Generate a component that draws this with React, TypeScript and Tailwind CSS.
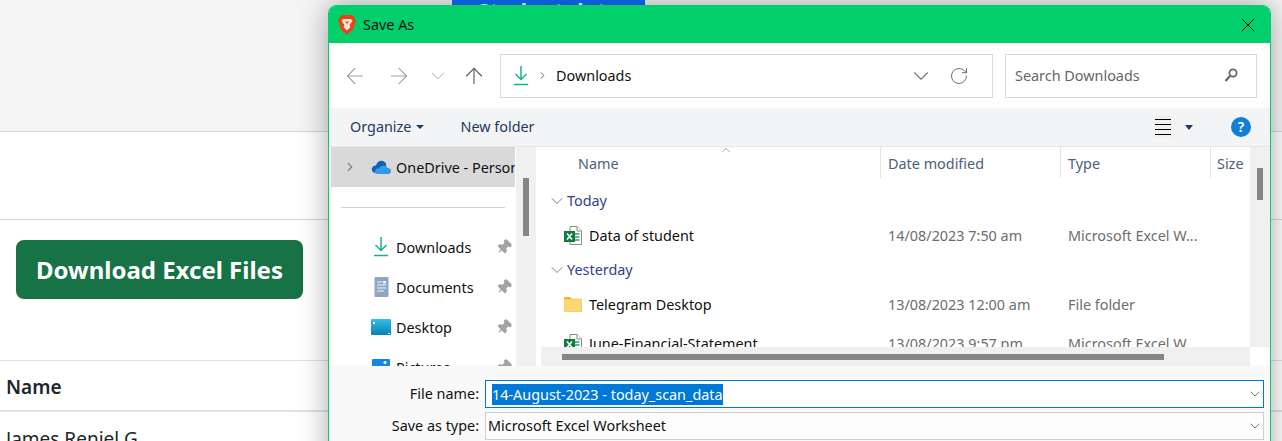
import React from 'react';
import { ArrowLeft, ArrowRight, ArrowUp, ChevronDown, ChevronRight, ChevronUp, RotateCw, X, Pin } from 'lucide-react';

const font = 'font-["Noto_Sans","Open_Sans",sans-serif]';

const BraveLogo = () => (
  <svg width="18" height="21" viewBox="0 0 18 21">
    <path d="M4 1 L14 1 L17 4 L16 5 L18 6 L15.5 14 Q15 16 12.5 17.8 L9 20.5 L5.5 17.8 Q3 16 2.5 14 L0 6 L2 5 L1 4 Z" fill="#f1400f" />
    <path d="M5 5 L13 5 L14.5 7 L11.5 11 L12.5 13 L9 16.5 L5.5 13 L6.5 11 L3.5 7 Z" fill="#ffffff" opacity="0.85" />
    <path d="M7 7 L8.3 9.5 L9.7 9.5 L11 7 L9 8 Z" fill="#f1400f" />
  </svg>
);

const DownloadIcon = () => (
  <svg width="14" height="20" viewBox="0 0 14 20" fill="none" stroke="#17b08e" strokeWidth="1.5">
    <path d="M7 0 V13 M1.5 8 L7 13.5 L12.5 8 M0 18.5 H14" />
  </svg>
);

const ExcelIcon = () => (
  <svg width="18" height="19" viewBox="0 0 18 19">
    <path d="M6 .5 H13 L17.5 5 V18.5 H6 Z" fill="#fff" stroke="#8a8a8a" />
    <path d="M13 .5 V5 H17.5" fill="#fff" stroke="#8a8a8a" />
    <path d="M11 8 H15.5 M11 11 H15.5 M11 14 H15.5" stroke="#2f9e62" strokeWidth="1.5" />
    <rect x="0" y="5" width="11" height="11" fill="#107c41" />
    <path d="M3 7.5 L8 13.5 M8 7.5 L3 13.5" stroke="#fff" strokeWidth="1.5" />
  </svg>
);

const FolderIcon = () => (
  <svg width="18" height="15" viewBox="0 0 18 15">
    <path d="M0 1 Q0 0 1 0 H6 L8 2 H0 Z" fill="#f2b233" />
    <rect x="0" y="2" width="18" height="13" rx="1" fill="#fcd874" stroke="#f2bc45" strokeWidth="0.6" />
  </svg>
);

const CloudIcon = () => (
  <svg width="20" height="14" viewBox="0 0 20 14">
    <path d="M4 13 Q0 12 1 8 Q2 5 5 5.5 Q7 0 12 1 Q15 2 15.5 5 L10 13 Z" fill="#0f62b8" />
    <path d="M6 14 Q3 13.5 4 10.5 Q5 8 8 8 Q10 5 13.5 5.5 Q16 6 16.5 8 Q20 8 20 11 Q20 14 17 14 Z" fill="#2f9be8" />
  </svg>
);

const DocumentsIcon = () => (
  <svg width="15" height="20" viewBox="0 0 15 20">
    <rect width="14" height="20" rx="1" x="0.5" fill="#8ea6c4" />
    <path d="M3 5 H8 M3 8 H12 M3 11 H12 M3 14 H10" stroke="#f2f5f9" strokeWidth="1.2" />
    <rect x="9" y="4" width="3" height="2.5" fill="#f2f5f9" />
  </svg>
);

const DesktopIcon = () => (
  <svg width="20" height="16" viewBox="0 0 20 16">
    <defs>
      <linearGradient id="desk" x1="0" y1="0" x2="0" y2="1">
        <stop offset="0" stopColor="#2fc2e0" />
        <stop offset="1" stopColor="#0a7fb5" />
      </linearGradient>
    </defs>
    <rect width="20" height="16" rx="1" fill="url(#desk)" />
    <rect x="2" y="3" width="2" height="2" fill="#fff" />
    <rect x="17" y="14" width="2" height="1" fill="#dff" />
  </svg>
);

const PicturesIcon = () => (
  <svg width="18" height="16" viewBox="0 0 18 16">
    <rect width="18" height="16" rx="1" fill="#1687e0" />
    <circle cx="13" cy="3.5" r="1.5" fill="#fff" />
  </svg>
);

const HelpIcon = () => (
  <div className="flex h-[20px] w-[20px] items-center justify-center rounded-full bg-[#0f7fd8] text-[14px] font-semibold leading-none text-white">?</div>
);

const NavItem = ({ icon, label }: { icon: React.ReactNode; label: string }) => (
  <div className="flex h-[40px] items-center">
    <div className="flex w-[65px] shrink-0 justify-end pr-[5px]">
      <div className="flex w-[20px] justify-center">{icon}</div>
    </div>
    <span className="flex-1 pt-px text-[#111]">{label}</span>
    <Pin size={16} className="mr-[3px] rotate-45 fill-[#a3a3a3] text-[#a3a3a3]" />
  </div>
);

const GroupRow = ({ label }: { label: string }) => (
  <div className="flex h-[34px] shrink-0 items-center pl-[6px]">
    <ChevronDown size={20} strokeWidth={1.2} className="text-[#808080]" />
    <span className="text-[#2f3f92]">{label}</span>
  </div>
);

const FileRow = ({ icon, name, date, type }: { icon: React.ReactNode; name: string; date: string; type: string }) => (
  <div className="flex h-[35px] shrink-0 items-center">
    <div className="flex w-[48px] shrink-0 justify-end pr-[7px]">{icon}</div>
    <span className="w-[299px] shrink-0 text-[#111]">{name}</span>
    <span className="w-[180px] shrink-0 text-[#6d6d6d]">{date}</span>
    <span className="text-[#6d6d6d]">{type}</span>
  </div>
);

const Column = ({ label, className }: { label: string; className: string }) => (
  <div className={`flex h-[31px] shrink-0 items-center border-r border-[#e5e5e5] pt-[2px] text-[#4c607a] ${className}`}>{label}</div>
);

const SaveDialog = () => (
  <div className="absolute left-[328px] top-[5px] flex h-[470px] w-[943px] flex-col overflow-hidden rounded-t-[8px] border border-[#00cf6b] bg-white text-[14.4px] shadow-[0_0_30px_rgba(0,0,0,0.35)]">
    {/* Title bar */}
    <div className="flex h-[37px] shrink-0 items-center bg-[#00cf6b] pl-[9px] pr-[10px] text-[#111]">
      <BraveLogo />
      <span className="ml-[7px] flex-1">Save As</span>
      <X size={24} strokeWidth={1} className="text-black" />
    </div>

    {/* Address row */}
    <div className="flex h-[65px] shrink-0 items-center">
      <ArrowLeft size={26} strokeWidth={1} className="ml-[13px] text-[#a0a0a0]" />
      <ArrowRight size={26} strokeWidth={1} className="ml-[18px] text-[#a0a0a0]" />
      <ChevronDown size={22} strokeWidth={1} className="ml-[15px] text-[#a0a0a0]" />
      <ArrowUp size={26} strokeWidth={1} className="ml-[12px] text-[#555]" />
      <div className="ml-[13px] flex h-[44px] w-[493px] items-center border border-[#d9d9d9] pl-[13px] pr-[23px]">
        <DownloadIcon />
        <ChevronRight size={11} className="ml-[9px] text-[#555]" />
        <span className="ml-[8px] flex-1 text-[#111]">Downloads</span>
        <ChevronDown size={26} strokeWidth={1} className="text-[#777]" />
        <RotateCw size={20} strokeWidth={1} className="ml-[15px] text-[#555]" />
      </div>
      <div className="ml-[12px] flex h-[44px] w-[252px] items-center justify-between border border-[#d9d9d9] pl-[9px] pr-[18px] text-[#666]">
        <span>Search Downloads</span>
        <svg width="14" height="15" viewBox="0 0 14 15" fill="none" stroke="#666" strokeWidth="1.8">
          <circle cx="9" cy="5" r="3.6" />
          <path d="M6 8 L1.5 13" strokeWidth="2.2" />
        </svg>
      </div>
    </div>

    {/* Toolbar */}
    <div className="flex h-[39px] shrink-0 items-center border-b border-[#e6e6e6] bg-[#f3f4f6] pl-[21px] text-[#1e3a5f]">
      <span>Organize</span>
      <span className="ml-[5px] h-0 w-0 border-x-[4px] border-t-[4px] border-x-transparent border-t-[#1e3a5f]" />
      <span className="ml-[36px] flex-1">New folder</span>
      <div className="flex h-[22px] w-[18px] flex-col justify-center gap-[4px] bg-[#f0f0f0] px-[1px]">
        <span className="h-px bg-black" />
        <span className="h-px bg-black" />
        <span className="h-px bg-black" />
        <span className="h-px bg-black" />
      </div>
      <span className="ml-[13px] h-0 w-0 border-x-[4px] border-t-[5px] border-x-transparent border-t-[#1e3a5f]" />
      <div className="ml-[38px] mr-[19px]">
        <HelpIcon />
      </div>
    </div>

    {/* Body */}
    <div className="flex h-[219px] shrink-0">
      {/* Nav pane */}
      <div className="ml-[2px] w-[184px] shrink-0 overflow-hidden">
        <div className="flex h-[40px] items-center bg-[#d9d9d9]">
          <ChevronRight size={14} className="ml-[12px] shrink-0 text-[#808080]" />
          <div className="ml-[14px] shrink-0">
            <CloudIcon />
          </div>
          <span className="ml-[5px] whitespace-nowrap pt-px text-[#111]">OneDrive - Personal</span>
        </div>
        <div className="mx-[10px] mt-[20px] mb-[19px] h-px bg-[#d4d4d4]" />
        <NavItem icon={<DownloadIcon />} label="Downloads" />
        <NavItem icon={<DocumentsIcon />} label="Documents" />
        <NavItem icon={<DesktopIcon />} label="Desktop" />
        <NavItem icon={<PicturesIcon />} label="Pictures" />
      </div>
      <div className="ml-px w-[20px] shrink-0 bg-[#f0f0f0] pl-[7px] pt-[31px]">
        <div className="h-[58px] w-[6px] bg-[#868686]" />
      </div>

      {/* File list */}
      <div className="ml-[5px] flex w-[709px] shrink-0 flex-col">
        <div className="flex h-[200px] flex-col overflow-hidden">
          <div className="flex shrink-0">
            <Column label="Name" className="relative w-[340px] pl-[37px]" />
            <ChevronUp size={14} strokeWidth={1.2} className="absolute ml-[178px] -mt-[4px] text-[#808080]" />
            <Column label="Date modified" className="w-[180px] pl-[7px]" />
            <Column label="Type" className="w-[150px] pl-[7px]" />
            <div className="flex h-[31px] items-center pl-[6px] pt-[2px] text-[#4c607a]">Size</div>
          </div>
          <div className="h-[6px] shrink-0" />
          <GroupRow label="Today" />
          <FileRow icon={<ExcelIcon />} name="Data of student" date="14/08/2023 7:50 am" type="Microsoft Excel W..." />
          <GroupRow label="Yesterday" />
          <FileRow icon={<FolderIcon />} name="Telegram Desktop" date="13/08/2023 12:00 am" type="File folder" />
          <div className="h-[4px] shrink-0" />
          <FileRow icon={<ExcelIcon />} name="June-Financial-Statement" date="13/08/2023 9:57 pm" type="Microsoft Excel W..." />
        </div>
        <div className="flex h-[19px] items-center bg-[#f0f0f0] pl-[21px]">
          <div className="h-[6px] w-[602px] bg-[#868686]" />
        </div>
      </div>
      <div className="h-[200px] w-[20px] shrink-0 bg-[#f0f0f0] pl-[7px] pt-[21px]">
        <div className="h-[32px] w-[6px] bg-[#868686]" />
      </div>
    </div>

    {/* File name and type */}
    <div className="flex flex-1 flex-col bg-[#f9f9f9] pt-[14px] text-[#111]">
      <div className="flex h-[28px] items-center">
        <span className="w-[156px] pr-[6px] text-right">File name:</span>
        <div className="flex h-[28px] w-[779px] items-center justify-between border border-[#0078d4] bg-white pl-[6px]">
          <span className="bg-[#0078d7] leading-[21px] text-white">14-August-2023 - today_scan_data</span>
          <ChevronDown size={16} strokeWidth={1.2} className="text-[#555]" />
        </div>
      </div>
      <div className="mt-[4px] flex h-[28px] items-center">
        <span className="w-[156px] pr-[6px] text-right">Save as type:</span>
        <div className="flex h-[28px] w-[779px] items-center justify-between border border-[#cfcfcf] bg-[#fdfdfd] pl-[2px]">
          <span>Microsoft Excel Worksheet</span>
          <ChevronDown size={16} strokeWidth={1.2} className="text-[#555]" />
        </div>
      </div>
    </div>
  </div>
);

export default function App() {
  return (
    <div className={`relative h-[441px] w-[1282px] overflow-hidden bg-white text-[#212529] ${font}`}>
      {/* Page behind the dialog */}
      <div className="h-[132px] border-b border-[#d5d5d5] bg-[#f5f5f5] pl-[452px]">
        <div className="flex h-[5px] w-[193px] items-start justify-center overflow-hidden bg-[#0d6efd] text-[22px] font-bold leading-[20px] text-white">
          <span className="whitespace-nowrap">Student data</span>
        </div>
      </div>
      <div className="h-[88px] border-b border-[#d5d5d5]" />
      <div className="h-[141px] border-b border-[#dee2e6] pl-[16px] pt-[20px]">
        <div className="flex h-[59px] w-[287px] items-center justify-center rounded-[8px] bg-[#177245] text-[24px] font-bold text-white">
          Download Excel Files
        </div>
      </div>
      <div className="flex h-[51px] items-center border-b-2 border-[#dee2e6] pl-[6px] pt-[3px] text-[19px] font-semibold">Name</div>
      <div className="pl-[6px] pt-[13px] text-[19px]">James Reniel G</div>

      <SaveDialog />
    </div>
  );
}
